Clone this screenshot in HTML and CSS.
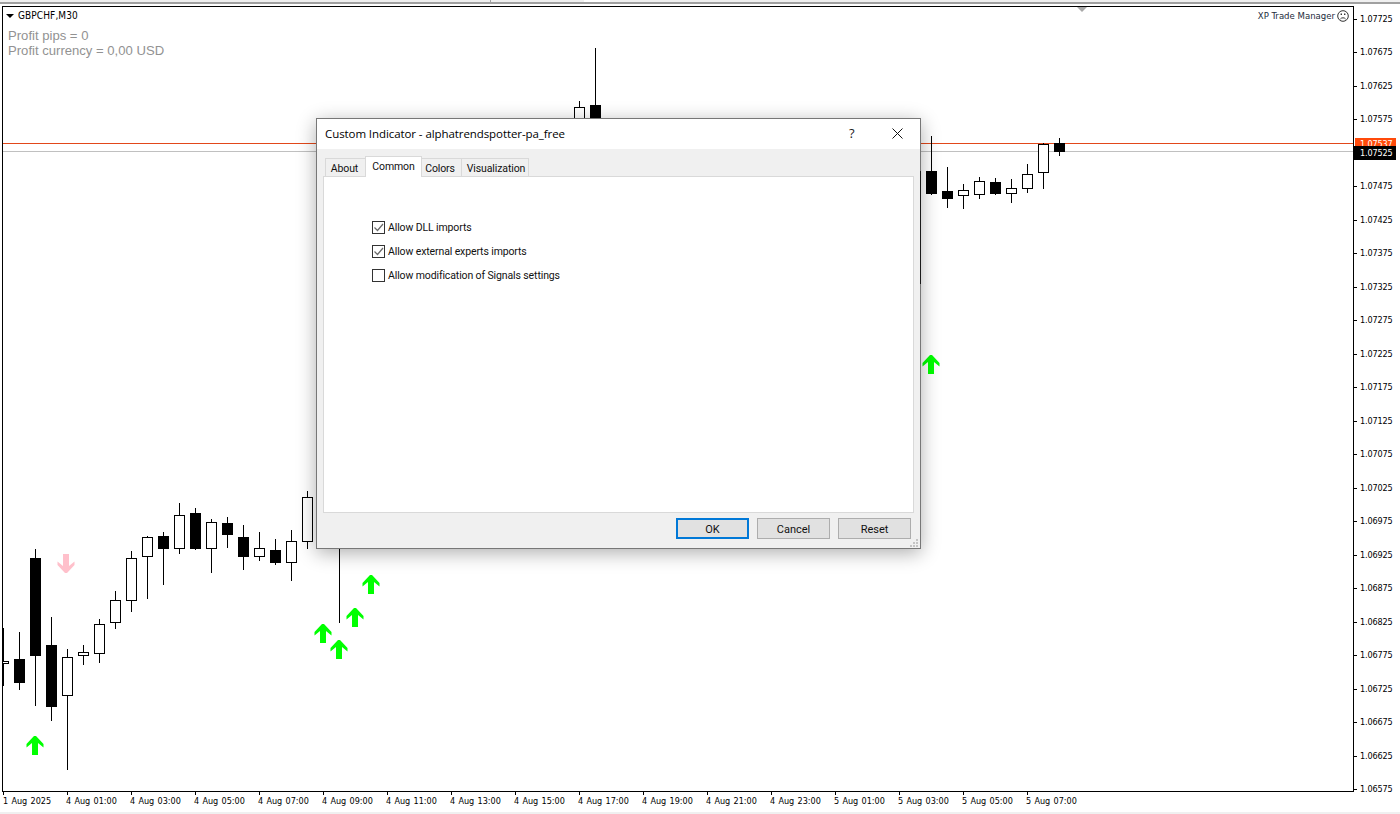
FILE: index.html
```html
<!DOCTYPE html>
<html lang="en">
<head>
<meta charset="utf-8">
<title>GBPCHF,M30</title>
<link rel="stylesheet" href="styles.css">
</head>
<body>
<div class="terminal">
  <div class="top-strip"><span class="tab-divider"></span><span class="tab-active"></span></div>
  <div class="main">
    <div class="chart">
      <svg class="candles" width="1350" height="784" aria-hidden="true">
        <defs>
          <polygon id="up" points="-1,0 1,0 8.5,8 8.5,11.5 3,7 3,19 -3,19 -3,7 -8.5,11.5 -8.5,8"/>
          <polygon id="down" points="-1,19 1,19 8.5,11 8.5,7.5 3,12 3,0 -3,0 -3,12 -8.5,7.5 -8.5,11"/>
        </defs>
        <g transform="translate(-3,-7)">
          <rect class="ask" x="0" y="143" width="1400" height="1"/>
          <rect class="bid" x="0" y="151" width="1400" height="1"/>
          <path class="wick" d="M3.5 628V686M19.5 632V690M35.5 549V706M51.5 617V721M67.5 649V770M83.5 645V665M99.5 619V663M115.5 591V629M131.5 551V612M147.5 536V599M163.5 532V585M179.5 503V554M195.5 508V550M211.5 519V573M227.5 517V548M243.5 525V570M259.5 532V561M275.5 539V565M291.5 530V581M307.5 491V549M339.5 540V623M579.5 101V125M595.5 48V125M931.5 136V195M947.5 167V208M963.5 184V209M979.5 177V199M995.5 178V195M1011.5 179V203M1027.5 164V193M1043.5 143V189M1059.5 138V156"/>
          <rect class="bear" x="14" y="659" width="11" height="24"/>
          <rect class="bear" x="30" y="558" width="11" height="98"/>
          <rect class="bear" x="46" y="645" width="11" height="62"/>
          <rect class="bear" x="158" y="536" width="11" height="13"/>
          <rect class="bear" x="190" y="513" width="11" height="36"/>
          <rect class="bear" x="222" y="523" width="11" height="12"/>
          <rect class="bear" x="238" y="537" width="11" height="20"/>
          <rect class="bear" x="270" y="550" width="11" height="13"/>
          <rect class="bear" x="590" y="105" width="11" height="20"/>
          <rect class="bear" x="926" y="171" width="11" height="23"/>
          <rect class="bear" x="942" y="191" width="11" height="8"/>
          <rect class="bear" x="990" y="182" width="11" height="12"/>
          <rect class="bear" x="1054" y="143" width="11" height="9"/>
          <rect class="bull" x="-1.5" y="661.5" width="10" height="2"/>
          <rect class="bull" x="62.5" y="657.5" width="10" height="38"/>
          <rect class="bull" x="78.5" y="652.5" width="10" height="3"/>
          <rect class="bull" x="94.5" y="624.5" width="10" height="29"/>
          <rect class="bull" x="110.5" y="600.5" width="10" height="22"/>
          <rect class="bull" x="126.5" y="558.5" width="10" height="42"/>
          <rect class="bull" x="142.5" y="537.5" width="10" height="19"/>
          <rect class="bull" x="174.5" y="515.5" width="10" height="33"/>
          <rect class="bull" x="206.5" y="522.5" width="10" height="26"/>
          <rect class="bull" x="254.5" y="548.5" width="10" height="8"/>
          <rect class="bull" x="286.5" y="541.5" width="10" height="21"/>
          <rect class="bull" x="302.5" y="497.5" width="10" height="44"/>
          <rect class="bull" x="574.5" y="107.5" width="10" height="20"/>
          <rect class="bull" x="958.5" y="190.5" width="10" height="5"/>
          <rect class="bull" x="974.5" y="181.5" width="10" height="13"/>
          <rect class="bull" x="1006.5" y="188.5" width="10" height="5"/>
          <rect class="bull" x="1022.5" y="174.5" width="10" height="14"/>
          <rect class="bull" x="1038.5" y="144.5" width="10" height="28"/>
          <use class="arrow-up" href="#up" x="35" y="736"/>
          <use class="arrow-up" href="#up" x="323" y="624"/>
          <use class="arrow-up" href="#up" x="339" y="640"/>
          <use class="arrow-up" href="#up" x="355" y="608"/>
          <use class="arrow-up" href="#up" x="371" y="575"/>
          <use class="arrow-up" href="#up" x="931" y="355"/>
          <use class="arrow-down" href="#down" x="66" y="554"/>
        </g>
      </svg>
      <div class="symbol"><span class="symbol-caret"></span>GBPCHF,M30</div>
      <div class="profit">
        <div>Profit pips = 0</div>
        <div>Profit currency = 0,00 USD</div>
      </div>
      <div class="manager">XP Trade Manager
        <svg class="frown" width="12" height="12" viewBox="0 0 12 12" aria-hidden="true">
          <circle cx="6" cy="6" r="5.3"/>
          <path d="M3.4 9C4.4 7.4 7.6 7.4 8.6 9"/>
          <path class="eyes" d="M3.6 3.6h1.4v1.4h-1.4zM7 3.6h1.4v1.4h-1.4z"/>
        </svg>
      </div>
      <span class="shift-mark"></span>
    </div>
    <div class="price-axis">
      <div class="ask-tag">1.07537</div>
      <div class="price">1.07725</div>
      <div class="price">1.07675</div>
      <div class="price">1.07625</div>
      <div class="price">1.07575</div>
      <div class="price current">1.07525</div>
      <div class="price">1.07475</div>
      <div class="price">1.07425</div>
      <div class="price">1.07375</div>
      <div class="price">1.07325</div>
      <div class="price">1.07275</div>
      <div class="price">1.07225</div>
      <div class="price">1.07175</div>
      <div class="price">1.07125</div>
      <div class="price">1.07075</div>
      <div class="price">1.07025</div>
      <div class="price">1.06975</div>
      <div class="price">1.06925</div>
      <div class="price">1.06875</div>
      <div class="price">1.06825</div>
      <div class="price">1.06775</div>
      <div class="price">1.06725</div>
      <div class="price">1.06675</div>
      <div class="price">1.06625</div>
      <div class="price">1.06575</div>
    </div>
  </div>
  <div class="time-axis">
    <div class="time first">1 Aug 2025</div>
    <div class="time">4 Aug 01:00</div>
    <div class="time">4 Aug 03:00</div>
    <div class="time">4 Aug 05:00</div>
    <div class="time">4 Aug 07:00</div>
    <div class="time">4 Aug 09:00</div>
    <div class="time">4 Aug 11:00</div>
    <div class="time">4 Aug 13:00</div>
    <div class="time">4 Aug 15:00</div>
    <div class="time">4 Aug 17:00</div>
    <div class="time">4 Aug 19:00</div>
    <div class="time">4 Aug 21:00</div>
    <div class="time">4 Aug 23:00</div>
    <div class="time">5 Aug 01:00</div>
    <div class="time">5 Aug 03:00</div>
    <div class="time">5 Aug 05:00</div>
    <div class="time">5 Aug 07:00</div>
  </div>
  <div class="bottom-strip"></div>

  <div class="dialog">
    <span class="hidden-body-edge"></span>
    <div class="titlebar">
      <div class="title">Custom Indicator - alphatrendspotter-pa_free</div>
      <div class="help">?</div>
      <svg class="close" width="11" height="11" viewBox="0 0 11 11" aria-hidden="true"><path d="M.5.5l10 10M10.5.5l-10 10"/></svg>
    </div>
    <div class="tabs">
      <div class="tab about">About</div>
      <div class="tab active">Common</div>
      <div class="tab colors">Colors</div>
      <div class="tab vis">Visualization</div>
    </div>
    <div class="panel">
      <div class="check-row">
        <span class="box"><svg width="11" height="11" viewBox="0 0 11 11" aria-hidden="true"><path d="M1.5 5.5l3 3 5.5-6.5"/></svg></span>
        <span class="label">Allow DLL imports</span>
      </div>
      <div class="check-row">
        <span class="box"><svg width="11" height="11" viewBox="0 0 11 11" aria-hidden="true"><path d="M1.5 5.5l3 3 5.5-6.5"/></svg></span>
        <span class="label">Allow external experts imports</span>
      </div>
      <div class="check-row">
        <span class="box"></span>
        <span class="label">Allow modification of Signals settings</span>
      </div>
    </div>
    <div class="footer">
      <button class="btn primary" type="button">OK</button>
      <button class="btn" type="button">Cancel</button>
      <button class="btn" type="button">Reset</button>
      <svg class="grip" width="8" height="8" viewBox="0 0 8 8" aria-hidden="true"><path d="M6 0h2v2h-2zM3 3h2v2h-2zM6 3h2v2h-2zM0 6h2v2h-2zM3 6h2v2h-2zM6 6h2v2h-2z"/></svg>
    </div>
  </div>
</div>
</body>
</html>
```
FILE: styles.css
```css
* { box-sizing: border-box; }
html, body { margin: 0; padding: 0; background: #fff; }
body { font-family: "Liberation Sans", Arial, sans-serif; overflow: hidden; }

.terminal { position: relative; width: 1400px; height: 814px; overflow: hidden; background: #fff; display: flex; flex-direction: column; }

.top-strip { position: relative; height: 6px; flex: none; background: linear-gradient(#f0f0f0 0 2px, #a0a0a0 2px 4px, #fff 4px); }
.tab-divider { position: absolute; left: 490px; top: 0; width: 1px; height: 2px; background: #a0a0a0; }
.tab-active { position: absolute; left: 584px; top: 0; width: 26px; height: 2px; background: #fff; }

.main { display: flex; flex: none; height: 786px; }
.chart { position: relative; flex: none; margin-left: 2px; width: 1352px; height: 786px; border: 1px solid #000; overflow: hidden; background: #fff; }
.candles { position: absolute; left: 0; top: 0; shape-rendering: crispEdges; }
.wick { stroke: #000; stroke-width: 1; fill: none; }
.bear { fill: #000; }
.bull { fill: #fff; stroke: #000; stroke-width: 1; }
.ask { fill: #e2481a; }
.bid { fill: #c0c0c0; }
.arrow-up { fill: #00ff00; shape-rendering: auto; }
.arrow-down { fill: #ffc0cb; shape-rendering: auto; }

.symbol { position: absolute; left: 3px; top: 2px; display: flex; align-items: center; height: 14px; color: #000; letter-spacing: .1px; font: 10px/14px "DejaVu Sans Condensed", "DejaVu Sans", sans-serif; }
.symbol-caret { width: 0; height: 0; margin-right: 4px; border-left: 4px solid transparent; border-right: 4px solid transparent; border-top: 4px solid #000; }
.profit { position: absolute; left: 5px; top: 21px; color: #929292; font: 13.1px/15px "Liberation Sans", Arial, sans-serif; }
.manager { position: absolute; right: 4px; top: 2px; display: flex; align-items: center; gap: 2px; height: 14px; color: #1d2c3c; font: 9.5px/14px "DejaVu Sans Condensed", "DejaVu Sans", sans-serif; white-space: nowrap; }
.frown { flex: none; fill: none; stroke: #333; stroke-width: 1; }
.frown .eyes { fill: #333; stroke: none; }
.shift-mark { position: absolute; left: 1074px; top: 0; width: 0; height: 0; border-left: 5px solid transparent; border-right: 5px solid transparent; border-top: 5px solid #a8a8a8; }

.price-axis { position: relative; flex: 1; padding-top: 5.5px; display: flex; flex-direction: column; }
.price { position: relative; flex: none; height: 33.5px; padding-left: 6px; color: #000; letter-spacing: -.15px; font: 9px/14px "DejaVu Sans Condensed", "DejaVu Sans", sans-serif; }
.price::before { content: ""; position: absolute; left: 0; top: 7px; width: 3px; height: 1px; background: #000; }
.price.current { z-index: 1; color: #fff; margin-right: 4px; background: linear-gradient(#000 0 14px, transparent 14px); }
.price.current::before { background: #000; }
.ask-tag { position: absolute; left: 1px; right: 4px; top: 132px; height: 9px; padding-left: 5px; overflow: hidden; background: #ff4a0a; color: #fff; letter-spacing: -.15px; font: 9px/12px "DejaVu Sans Condensed", "DejaVu Sans", sans-serif; }

.time-axis { display: flex; flex: none; height: 20px; padding-left: 3px; }
.time { position: relative; flex: none; width: 64px; padding-top: 2px; color: #000; white-space: nowrap; word-spacing: .7px; font: 9px/14px "DejaVu Sans Condensed", "DejaVu Sans", sans-serif; }
.time.first { width: 63px; }
.time::before { content: ""; position: absolute; left: 1px; top: -1px; width: 1px; height: 4px; background: #000; }
.time.first::before { left: 0; }
.bottom-strip { flex: 1; background: #f0f0f0; }

.dialog { position: absolute; left: 316px; top: 118px; width: 605px; height: 431px; display: flex; flex-direction: column; background: #f0f0f0; border: 1px solid #777; box-shadow: 0 4px 18px rgba(0,0,0,.32); color: #000; }
.hidden-body-edge { position: absolute; right: -1px; top: 52px; width: 1px; height: 113px; background: #1a1a1a; }
.titlebar { position: relative; flex: none; height: 30px; background: #fff; }
.title { position: absolute; left: 8px; top: 7px; letter-spacing: -.08px; font: 11.5px/16px "Open Sans", sans-serif; color: #000; white-space: nowrap; }
.help { position: absolute; left: 532px; top: 6px; font: 13px/17px "Open Sans", sans-serif; color: #222; }
.close { position: absolute; left: 575px; top: 9px; fill: none; stroke: #111; stroke-width: 1; }

.tabs { display: flex; flex: none; height: 20px; margin-top: 7px; padding-left: 9px; align-items: flex-end; position: relative; z-index: 1; }
.tab { height: 18px; border: 1px solid #d9d9d9; border-bottom: 0; background: #f0f0f0; margin-left: -1px; letter-spacing: -.12px; font: 10.5px/19px Roboto, sans-serif; text-align: center; color: #111; white-space: nowrap; }
.tab.about { width: 41px; padding-right: 2px; }
.tab.active { width: 57px; height: 21px; background: #fff; line-height: 19px; margin-bottom: -1px; position: relative; }
.tab.colors { width: 41px; padding-right: 3px; }
.tab.vis { width: 68px; padding-left: 2px; }

.panel { flex: none; height: 337px; margin: 0 6px 0 6px; background: #fff; border: 1px solid #d9d9d9; padding: 44px 0 0 48px; display: flex; flex-direction: column; gap: 11px; }
.check-row { display: flex; align-items: center; gap: 3px; height: 13px; }
.box { flex: none; width: 13px; height: 13px; display: flex; align-items: center; justify-content: center; background: #fff; border: 1px solid #333; }
.box svg { fill: none; stroke: #6a6a6a; stroke-width: 1.2; }
.label { letter-spacing: -.12px; font: 10.5px/14px Roboto, sans-serif; color: #111; white-space: nowrap; }

.footer { position: relative; flex: 1; display: flex; justify-content: flex-end; gap: 8px; padding: 5px 9px 0 0; }
.btn { flex: none; width: 73px; height: 21px; padding: 1px 0 0; background: #e1e1e1; border: 1px solid #adadad; font: 11px/17px Roboto, sans-serif; color: #111; }
.btn.primary { border: 2px solid #0078d7; }
.grip { position: absolute; right: 2px; bottom: 1px; fill: #c4c4c4; }
```
